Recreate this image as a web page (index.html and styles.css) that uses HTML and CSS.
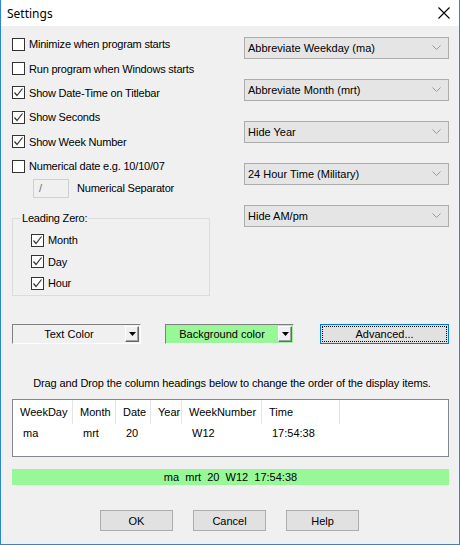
FILE: index.html
```html
<!DOCTYPE html>
<html>
<head>
<meta charset="utf-8">
<link rel="stylesheet" href="styles.css">
</head>
<body>
<div class="window">
  <div class="titlebar">
    <span class="title">Settings</span>
    <svg class="close" width="12" height="12" viewBox="0 0 12 12"><path d="M0.5 0.5 L11.5 11.5 M11.5 0.5 L0.5 11.5" stroke="#000" stroke-width="1.1" fill="none"/></svg>
  </div>
  <div class="content">
    <div class="top">
      <div class="left">
        <label class="cb"><span class="box"></span>Minimize when program starts</label>
        <label class="cb"><span class="box"></span>Run program when Windows starts</label>
        <label class="cb"><span class="box checked"><svg width="11" height="11" viewBox="0 0 11 11"><path d="M1.5 5.5 L4 8.5 L9.5 1.5" stroke="#333" stroke-width="1.2" fill="none"/></svg></span>Show Date-Time on Titlebar</label>
        <label class="cb"><span class="box checked"><svg width="11" height="11" viewBox="0 0 11 11"><path d="M1.5 5.5 L4 8.5 L9.5 1.5" stroke="#333" stroke-width="1.2" fill="none"/></svg></span>Show Seconds</label>
        <label class="cb"><span class="box checked"><svg width="11" height="11" viewBox="0 0 11 11"><path d="M1.5 5.5 L4 8.5 L9.5 1.5" stroke="#333" stroke-width="1.2" fill="none"/></svg></span>Show Week Number</label>
        <label class="cb"><span class="box"></span>Numerical date e.g. 10/10/07</label>
        <div class="seprow">
          <span class="sepbox">/</span>
          <span class="seplabel">Numerical Separator</span>
        </div>
        <fieldset class="group">
          <legend>Leading Zero:</legend>
          <label class="cb small"><span class="box checked"><svg width="11" height="11" viewBox="0 0 11 11"><path d="M1.5 5.5 L4 8.5 L9.5 1.5" stroke="#333" stroke-width="1.2" fill="none"/></svg></span>Month</label>
          <label class="cb small"><span class="box checked"><svg width="11" height="11" viewBox="0 0 11 11"><path d="M1.5 5.5 L4 8.5 L9.5 1.5" stroke="#333" stroke-width="1.2" fill="none"/></svg></span>Day</label>
          <label class="cb small"><span class="box checked"><svg width="11" height="11" viewBox="0 0 11 11"><path d="M1.5 5.5 L4 8.5 L9.5 1.5" stroke="#333" stroke-width="1.2" fill="none"/></svg></span>Hour</label>
        </fieldset>
      </div>
      <div class="right">
        <div class="combo"><span>Abbreviate Weekday (ma)</span><svg width="9" height="6" viewBox="0 0 9 6"><path d="M0.5 0.5 L4.5 4.5 L8.5 0.5" stroke="#9a9a9a" stroke-width="1" fill="none"/></svg></div>
        <div class="combo"><span>Abbreviate Month (mrt)</span><svg width="9" height="6" viewBox="0 0 9 6"><path d="M0.5 0.5 L4.5 4.5 L8.5 0.5" stroke="#9a9a9a" stroke-width="1" fill="none"/></svg></div>
        <div class="combo"><span>Hide Year</span><svg width="9" height="6" viewBox="0 0 9 6"><path d="M0.5 0.5 L4.5 4.5 L8.5 0.5" stroke="#9a9a9a" stroke-width="1" fill="none"/></svg></div>
        <div class="combo"><span>24 Hour Time (Military)</span><svg width="9" height="6" viewBox="0 0 9 6"><path d="M0.5 0.5 L4.5 4.5 L8.5 0.5" stroke="#9a9a9a" stroke-width="1" fill="none"/></svg></div>
        <div class="combo"><span>Hide AM/pm</span><svg width="9" height="6" viewBox="0 0 9 6"><path d="M0.5 0.5 L4.5 4.5 L8.5 0.5" stroke="#9a9a9a" stroke-width="1" fill="none"/></svg></div>
      </div>
    </div>

    <div class="colors">
      <div class="colorpick">
        <span class="cptext">Text Color</span>
        <span class="cpbtn"><svg width="7" height="4" viewBox="0 0 7 4"><path d="M0 0 H7 L3.5 4 Z" fill="#000"/></svg></span>
      </div>
      <div class="colorpick green">
        <span class="cptext">Background color</span>
        <span class="cpbtn"><svg width="7" height="4" viewBox="0 0 7 4"><path d="M0 0 H7 L3.5 4 Z" fill="#000"/></svg></span>
      </div>
      <div class="advanced"><span class="focus">Advanced...</span></div>
    </div>

    <div class="hint">Drag and Drop the column headings below to change the order of the display items.</div>

    <div class="listview">
      <div class="lvrow head">
        <span class="c1">WeekDay</span><span class="c2">Month</span><span class="c3">Date</span><span class="c4">Year</span><span class="c5">WeekNumber</span><span class="c6">Time</span>
      </div>
      <div class="lvrow data">
        <span class="c1">ma</span><span class="c2">mrt</span><span class="c3">20</span><span class="c4"></span><span class="c5">W12</span><span class="c6">17:54:38</span>
      </div>
    </div>

    <div class="preview">ma&nbsp; mrt&nbsp; 20&nbsp; W12&nbsp; 17:54:38</div>

    <div class="buttons">
      <div class="btn">OK</div>
      <div class="btn">Cancel</div>
      <div class="btn">Help</div>
    </div>
  </div>
</div>
</body>
</html>
```

FILE: styles.css
```css
* { box-sizing: border-box; }
html, body { margin: 0; padding: 0; background: #f0f0f0; }
body {
  font-family: "Liberation Sans", Arial, sans-serif;
  font-size: 11px;
  color: #000;
}
.window {
  width: 460px;
  height: 545px;
  border: 1px solid #2b87d6;
  border-top: none;
  background: #f0f0f0;
  display: flex;
  flex-direction: column;
}
.titlebar {
  height: 26px;
  background: #fff;
  display: flex;
  align-items: center;
  justify-content: space-between;
  padding: 0 9px 0 6px;
}
.title {
  font-family: "Noto Sans", "Open Sans", sans-serif;
  font-size: 12px;
}
.close { display: block; }
.content {
  flex: 1;
  padding: 0 10px 0 11px;
  display: flex;
  flex-direction: column;
}
.top {
  display: flex;
  justify-content: space-between;
  padding-top: 6px;
}
.left { width: 198px; display: flex; flex-direction: column; }
.cb {
  display: flex;
  align-items: center;
  height: 24.4px;
  white-space: nowrap;
  letter-spacing: -0.2px;
}
.box {
  width: 13px;
  height: 13px;
  border: 1px solid #333;
  background: #fff;
  margin-right: 4px;
  display: flex;
  align-items: center;
  justify-content: center;
  flex: none;
}
.box svg { display: block; }
.seprow {
  display: flex;
  align-items: center;
  height: 20px;
  padding-left: 21px;
  letter-spacing: -0.2px;
}
.sepbox {
  width: 36px;
  height: 19px;
  border: 1px solid #d0d0d0;
  color: #6d6d6d;
  padding-left: 5px;
  line-height: 17px;
}
.seplabel { margin-left: 8px; }
.group {
  margin: 14px 0 0 0;
  padding: 5px 0 0 0;
  height: 84px;
  width: 198px;
  border: 1px solid #dcdcdc;
  border-radius: 0;
  min-width: 0;
}
.group legend {
  padding: 0 1px;
  margin-left: 8px;
  line-height: 12px;
  letter-spacing: -0.2px;
}
.cb.small { height: 21.5px; margin-left: 18px; }
.right {
  width: 205px;
  padding-top: 5px;
  display: flex;
  flex-direction: column;
  gap: 20px;
}
.combo {
  height: 22px;
  background: #e5e5e5;
  border: 1px solid #adadad;
  display: flex;
  align-items: center;
  justify-content: space-between;
  padding: 0 7px 0 3px;
}
.combo svg { display: block; }
.colors {
  display: flex;
  align-items: center;
  margin-top: 27px;
  height: 21px;
}
.colorpick {
  width: 129px;
  height: 20px;
  border-top: 1px solid #808080;
  border-left: 1px solid #808080;
  border-bottom: 1px solid #fff;
  border-right: 1px solid #fff;
  background: #f0f0f0;
  display: flex;
  align-items: center;
  padding: 0 1px 0 0;
}
.colorpick.green { background: #98f898; margin-left: 24px; }
.cptext { flex: 1; text-align: center; }
.cpbtn {
  width: 14px;
  height: 16px;
  background: #f0f0f0;
  border-top: 1px solid #fff;
  border-left: 1px solid #fff;
  border-right: 1px solid #696969;
  border-bottom: 1px solid #696969;
  box-shadow: inset -1px -1px 0 #a0a0a0;
  display: flex;
  align-items: center;
  justify-content: center;
}
.cpbtn svg { display: block; }
.advanced {
  margin-left: 26px;
  width: 129px;
  height: 20px;
  border: 1px solid #0078d7;
  background: #e1e1e1;
  padding: 1px;
}
.focus {
  display: flex;
  height: 100%;
  align-items: center;
  justify-content: center;
  border: 1px dotted #000;
}
.hint {
  margin-top: 32px;
  text-align: center;
  height: 14px;
  line-height: 14px;
  padding-left: 3px;
  letter-spacing: -0.12px;
}
.listview {
  margin-top: 9px;
  height: 58px;
  width: 437px;
  border: 1px solid #828790;
  background: #fff;
}
.lvrow {
  display: grid;
  grid-template-columns: 60px 43px 35px 31px 80px 78px;
}
.lvrow.head { height: 24px; }
.lvrow.head span {
  border-right: 1px solid #e5e5e5;
  padding-left: 7px;
  line-height: 24px;
}
.lvrow.data span {
  padding-left: 10px;
  line-height: 18px;
}
.preview {
  margin-top: 12px;
  width: 437px;
  height: 16px;
  background: #98f898;
  text-align: center;
  line-height: 16px;
}
.buttons {
  margin-top: 25px;
  display: flex;
  justify-content: center;
  gap: 20px;
  padding-right: 2px;
}
.btn {
  width: 73px;
  height: 21px;
  background: #e1e1e1;
  border: 1px solid #adadad;
  display: flex;
  align-items: center;
  justify-content: center;
}
```
